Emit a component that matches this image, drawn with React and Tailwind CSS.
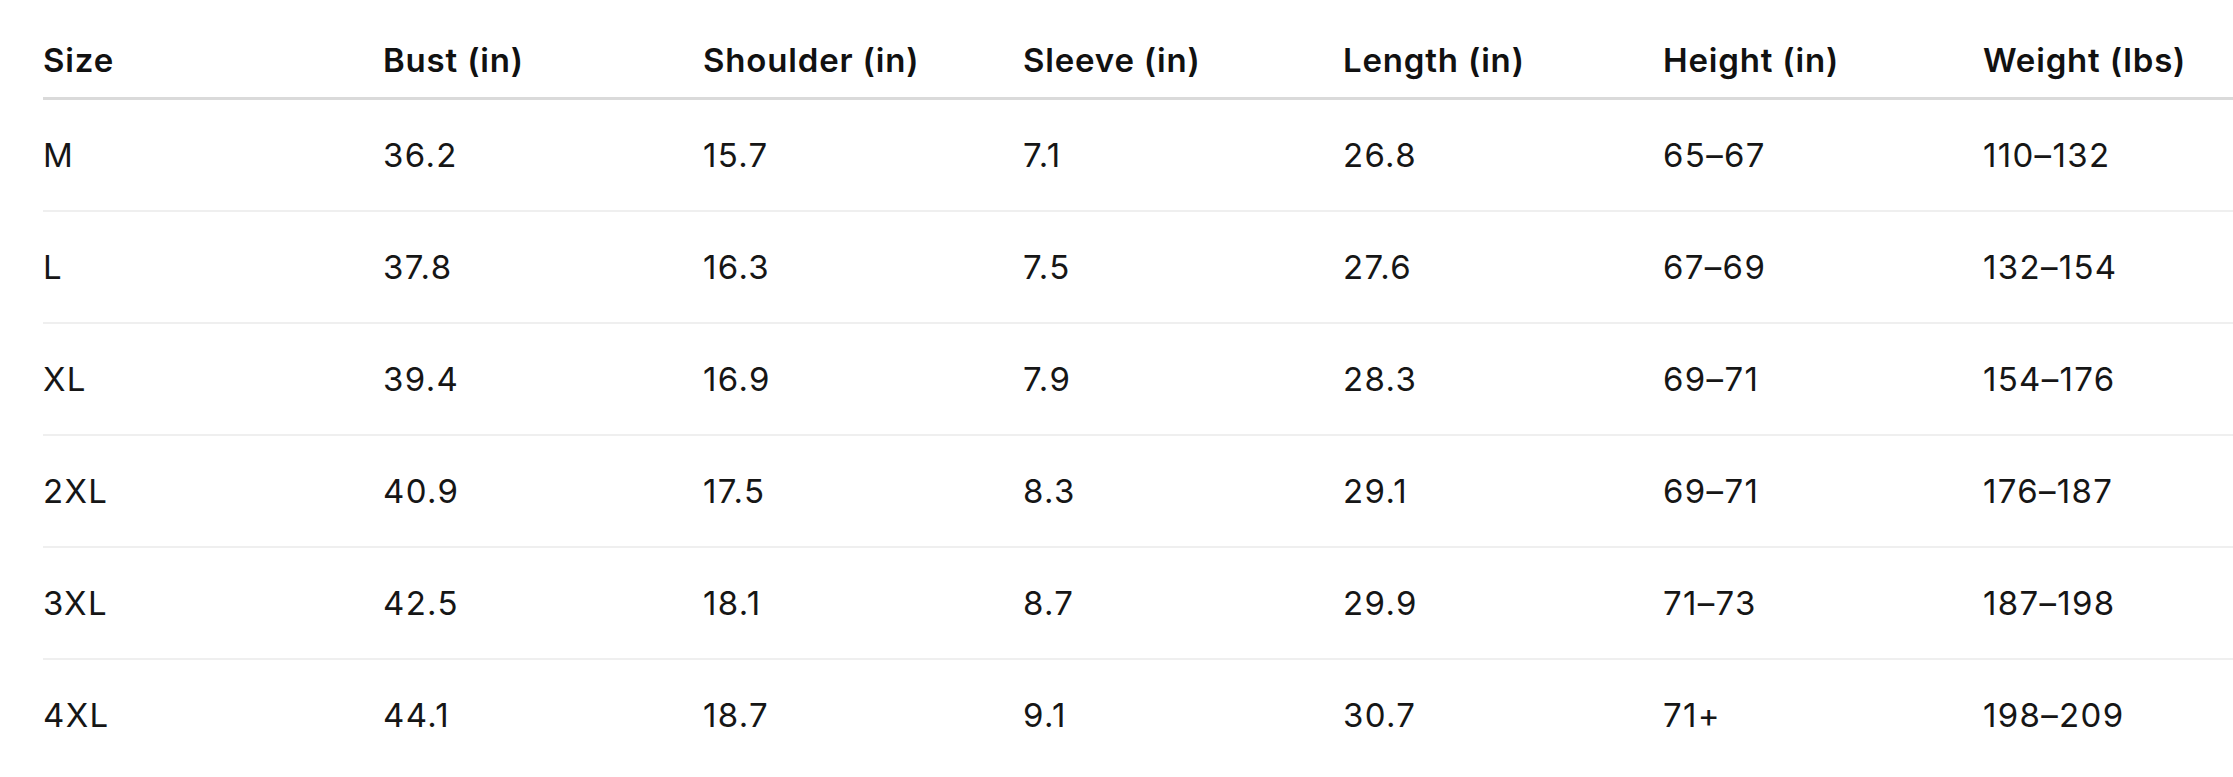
import React from 'react';

const headers = ['Size', 'Bust (in)', 'Shoulder (in)', 'Sleeve (in)', 'Length (in)', 'Height (in)', 'Weight (lbs)'];

const rows = [
  ['M', '36.2', '15.7', '7.1', '26.8', '65–67', '110–132'],
  ['L', '37.8', '16.3', '7.5', '27.6', '67–69', '132–154'],
  ['XL', '39.4', '16.9', '7.9', '28.3', '69–71', '154–176'],
  ['2XL', '40.9', '17.5', '8.3', '29.1', '69–71', '176–187'],
  ['3XL', '42.5', '18.1', '8.7', '29.9', '71–73', '187–198'],
  ['4XL', '44.1', '18.7', '9.1', '30.7', '71+', '198–209'],
];

const colWidths = ['w-[340px]', 'w-[320px]', 'w-[320px]', 'w-[320px]', 'w-[320px]', 'w-[320px]', 'w-[270px]'];

const App = () => {
  return (
    <div className="w-[2233px] h-[777px] overflow-hidden bg-white pl-[43px] pt-[12px] font-['Inter','Liberation_Sans',sans-serif]">
      <table className="w-[2190px] table-fixed border-collapse text-left">
        <colgroup>
          {colWidths.map((w, i) => <col key={i} className={w} />)}
        </colgroup>
        <thead>
          <tr className="border-b-[3px] border-[#dadada]">
            {headers.map(h => (
              <th key={h} className="pt-[24px] pb-[13px] text-[33px] leading-[48px] font-semibold tracking-[0.025em] text-[#111111]">{h}</th>
            ))}
          </tr>
        </thead>
        <tbody>
          {rows.map((r, i) => (
            <tr key={i} className={i < rows.length - 1 ? 'border-b-2 border-[#efefef]' : ''}>
              {r.map((c, j) => (
                <td key={j} className="py-[31px] text-[33px] leading-[48px] font-normal tracking-[0.04em] text-[#161616]">{c}</td>
              ))}
            </tr>
          ))}
        </tbody>
      </table>
    </div>
  );
};

export default App;
